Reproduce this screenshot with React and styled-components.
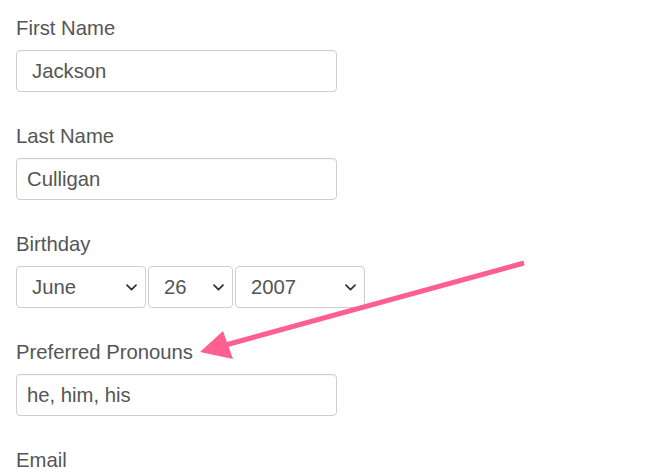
import React from 'react';
import styled, { createGlobalStyle } from 'styled-components';

const GlobalStyle = createGlobalStyle`
  html, body {
    margin: 0;
    padding: 0;
    background: #ffffff;
  }
  body {
    font-family: "Liberation Sans", Arial, sans-serif;
    overflow: hidden;
  }
`;

const Page = styled.div`
  position: relative;
  width: 647px;
  height: 476px;
  overflow: hidden;
`;

const Form = styled.form`
  display: flex;
  flex-direction: column;
  padding: 17px 0 0 16px;
`;

const Field = styled.div`
  display: flex;
  flex-direction: column;
  align-items: flex-start;
  margin-bottom: 33px;
`;

const Label = styled.label`
  display: block;
  font-size: 20.3px;
  line-height: 22px;
  color: #555555;
  margin-bottom: 11px;
`;

const TextInput = styled.input`
  box-sizing: border-box;
  width: 321px;
  height: 42px;
  padding: 0 0 0 ${(p) => p.$indent}px;
  border: 1px solid #cfcfcf;
  border-radius: 4px;
  box-shadow: inset 0 1px 1px rgba(0, 0, 0, 0.04);
  font-family: "Liberation Sans", Arial, sans-serif;
  font-size: 20.3px;
  color: #555555;
  background: #ffffff;
  outline: none;
`;

const SelectRow = styled.div`
  display: flex;
  gap: 2px;
`;

const SelectWrap = styled.div`
  position: relative;
  width: ${(p) => p.$width}px;
  height: 42px;
`;

const Select = styled.select`
  box-sizing: border-box;
  width: 100%;
  height: 100%;
  appearance: none;
  -webkit-appearance: none;
  padding: 0 0 0 15px;
  border: 1px solid #cfcfcf;
  border-radius: 4px;
  background: #ffffff;
  font-family: "Liberation Sans", Arial, sans-serif;
  font-size: 20.3px;
  color: #555555;
  outline: none;
`;

const Chevron = styled.svg`
  position: absolute;
  right: 9px;
  top: 18px;
  width: 11px;
  height: 7px;
  pointer-events: none;
`;

const Arrow = styled.svg`
  position: absolute;
  left: 0;
  top: 0;
  pointer-events: none;
`;

const DateSelect = ({ width, value, options }) => (
  <SelectWrap $width={width}>
    <Select defaultValue={value}>
      {options.map((o) => (
        <option key={o}>{o}</option>
      ))}
    </Select>
    <Chevron viewBox="0 0 11 7">
      <path d="M1 1.2l4.5 4.5 4.5-4.5" fill="none" stroke="#333" strokeWidth="1.7" strokeLinecap="round" strokeLinejoin="round" />
    </Chevron>
  </SelectWrap>
);

export default function App() {
  return (
    <Page>
      <GlobalStyle />
      <Form>
        <Field>
          <Label>First Name</Label>
          <TextInput $indent={15} defaultValue="Jackson" />
        </Field>
        <Field>
          <Label>Last Name</Label>
          <TextInput $indent={10} defaultValue="Culligan" />
        </Field>
        <Field>
          <Label>Birthday</Label>
          <SelectRow>
            <DateSelect width={130} value="June" options={['May', 'June', 'July']} />
            <DateSelect width={85} value="26" options={['25', '26', '27']} />
            <DateSelect width={130} value="2007" options={['2006', '2007', '2008']} />
          </SelectRow>
        </Field>
        <Field>
          <Label>Preferred Pronouns</Label>
          <TextInput $indent={10} defaultValue="he, him, his" />
        </Field>
        <Field>
          <Label>Email</Label>
        </Field>
      </Form>
      <Arrow width="647" height="476" viewBox="0 0 647 476">
        <line x1="524" y1="263" x2="222" y2="346" stroke="#fe5f8f" strokeWidth="5" />
        <polygon points="200,352 223,331 233,359" fill="#fe5f8f" />
      </Arrow>
    </Page>
  );
}
